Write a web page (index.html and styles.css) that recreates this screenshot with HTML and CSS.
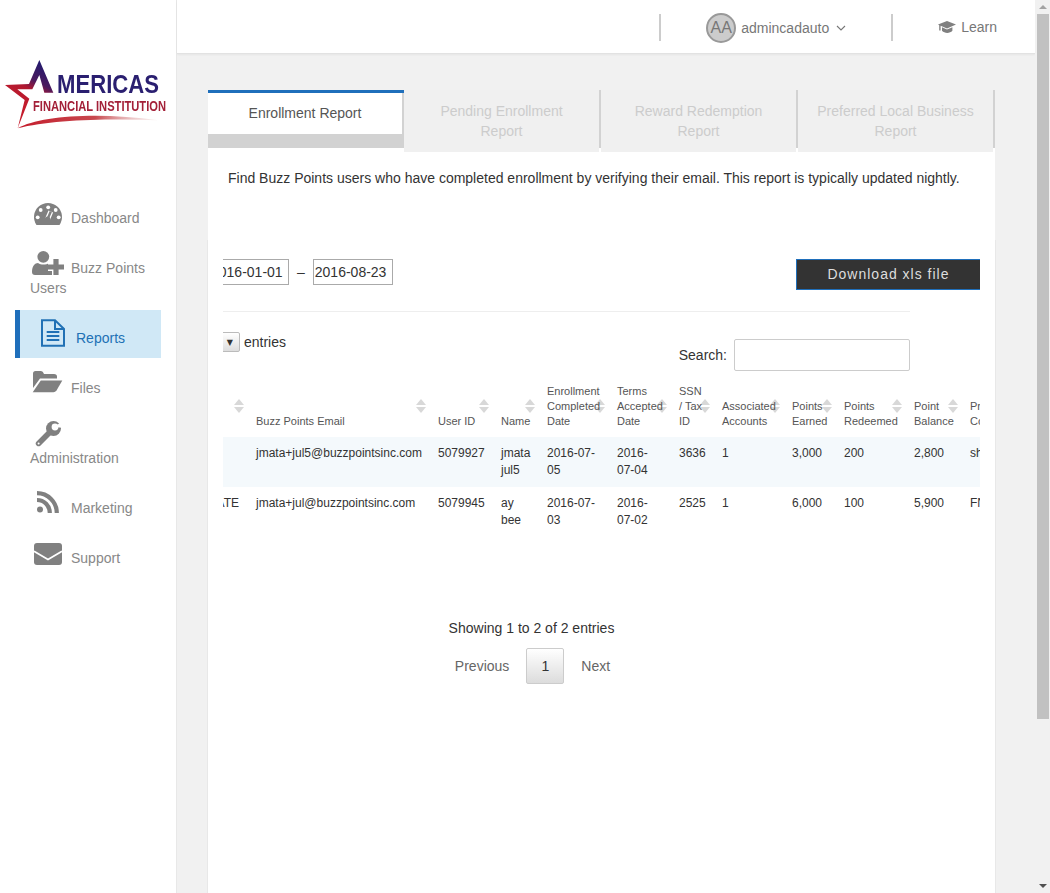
FILE: index.html
```html
<!DOCTYPE html>
<html lang="en">
<head>
<meta charset="utf-8">
<title>Enrollment Report</title>
<link rel="stylesheet" href="styles.css">
</head>
<body>
<div class="app">
  <aside class="sidebar">
    <svg class="logo" viewBox="0 0 176 110" width="176" height="110">
      <defs>
        <linearGradient id="starFill" gradientUnits="userSpaceOnUse" x1="125" y1="70" x2="60" y2="190">
          <stop offset="0" stop-color="#241a6e"/>
          <stop offset="0.4" stop-color="#4a1a5e"/>
          <stop offset="0.62" stop-color="#b01830"/>
          <stop offset="1" stop-color="#c41c2c"/>
        </linearGradient>
        <linearGradient id="swooshFill" x1="0" y1="0" x2="1" y2="0">
          <stop offset="0" stop-color="#c41c2c"/>
          <stop offset="0.55" stop-color="#c8484e"/>
          <stop offset="1" stop-color="#e8c8c8" stop-opacity="0.2"/>
        </linearGradient>
      </defs>
      <g transform="scale(0.3333)">
        <polygon fill="url(#starFill)" points="118,60 160,158 133,158 118,105 97,148 52,148 88,176 53,265 74,180 15,135 87,132"/>
        <path fill="url(#swooshFill)" d="M53 265 C120 226 300 216 476 241 C320 235 150 240 53 265Z"/>
      </g>
      <text class="logo-main" x="57" y="53" textLength="102" lengthAdjust="spacingAndGlyphs">MERICAS</text>
      <text class="logo-sub" x="33" y="71" textLength="133" lengthAdjust="spacingAndGlyphs">FINANCIAL INSTITUTION</text>
    </svg>
    <nav class="nav">
      <a class="nav-item">
        <svg class="nav-icon" viewBox="0 0 28 28"><path class="ico" d="M2.5 27 A14 14 0 1 1 25.5 27Z"/><g class="ico-cut"><circle cx="14.2" cy="9.3" r="1.9"/><circle cx="6.7" cy="12" r="1.9"/><circle cx="21.7" cy="12" r="1.9"/><circle cx="3.7" cy="19.3" r="1.9"/><circle cx="24.7" cy="19.3" r="1.9"/></g><path class="needle-cut" d="M13.6 21 L16.8 13.5"/><path class="needle" d="M13.6 21 L16.8 13.5"/><circle class="ico" cx="13.6" cy="21" r="2.6"/></svg>Dashboard
      </a>
      <a class="nav-item">
        <svg class="nav-icon" viewBox="0 0 28 28"><circle class="ico" cx="9.3" cy="8.8" r="5.9"/><path class="ico" d="M-2 24 C-2 18 1 15 4 15 C7 17 12 17 15 15 C18 15 20 17 20 20 V27 H1 C-1 27 -2 26 -2 24Z"/><path class="plus-cut" d="M22 11 V27 M14 19 H30"/><path class="plus" d="M22 11 V27 M14 19 H30"/></svg>Buzz Points Users
      </a>
      <a class="nav-item nav-item-active">
        <svg class="nav-icon" viewBox="0 0 28 28"><path class="doc" d="M3 2.3 H16 L25 11 V27.7 H3Z"/><path class="doc" d="M16 2.3 V11 H25"/><path class="doc-lines" d="M7.7 13.9 H20.3 M7.7 18 H20.3 M7.7 22 H20.3"/></svg>Reports
      </a>
      <a class="nav-item">
        <svg class="nav-icon" viewBox="0 0 28 28"><path class="ico" d="M-1 5.5 Q-1 3 1.5 3 H7 Q9 3 10 6 H20 Q23 6 23 8.5 V10.5 H6 L-1 20Z"/><path class="ico" d="M6.8 12.5 H28.3 L22.5 22.5 Q21.3 24.3 19.5 24.3 H-1.3Z"/></svg>Files
      </a>
      <a class="nav-item">
        <svg class="nav-icon" viewBox="0 0 28 28"><path class="wrench" d="M4.6 25.4 L16 14"/><circle class="ico" cx="19.5" cy="10.5" r="7.5"/><circle class="ico-cut" cx="21" cy="9" r="3.4"/><polygon class="ico-cut" points="21,9 30,1 30,10"/><circle class="ico-cut" cx="4.6" cy="25.4" r="1"/></svg>Administration
      </a>
      <a class="nav-item">
        <svg class="nav-icon" viewBox="0 0 28 28"><circle class="ico" cx="6" cy="21.6" r="3"/><path class="rss" d="M3 12 A12.8 12.8 0 0 1 15.8 25"/><path class="rss" d="M3 5.2 A19.8 19.8 0 0 1 22.8 25"/></svg>Marketing
      </a>
      <a class="nav-item">
        <svg class="nav-icon" viewBox="0 0 28 28"><rect class="ico" x="0" y="5" width="28" height="22" rx="3"/><path class="env-cut" d="M0 13.2 L14 21.5 L28 13.2"/></svg>Support
      </a>
    </nav>
  </aside>

  <div class="main">
    <header class="topbar">
      <span class="divider"></span>
      <div class="user">
        <span class="avatar">AA</span>
        <span>admincadauto</span>
        <svg class="chevron" viewBox="0 0 10 6" width="10" height="6"><path d="M1 1 L5 5 L9 1"/></svg>
      </div>
      <span class="divider"></span>
      <div class="learn">
        <svg class="cap" viewBox="0 0 18 13" width="18" height="13"><path d="M9 0 L18 3.6 L9 7.4 L2.6 4.8 V9.6 H1.2 V4.2 L0 3.6Z"/><path d="M4 6.2 L9 8.4 L14.4 6.2 V9.8 C12 12.6 6.5 12.6 4 9.8Z"/></svg>
        <span>Learn</span>
      </div>
    </header>

    <section class="panel">
      <div class="tabs">
        <div class="tab tab-active">Enrollment Report</div>
        <div class="tab">Pending Enrollment Report</div>
        <div class="tab">Reward Redemption Report</div>
        <div class="tab">Preferred Local Business Report</div>
      </div>
      <p class="description">Find Buzz Points users who have completed enrollment by verifying their email. This report is typically updated nightly.</p>
      <div class="report">
        <div class="clip">
          <div class="inner">
            <div class="controls">
              <div class="dates">
                <input class="date" type="text" value="2016-01-01">
                <span>–</span>
                <input class="date" type="text" value="2016-08-23">
              </div>
              <button class="download" type="button">Download xls file</button>
            </div>
            <div class="rule"></div>
            <div class="filters">
              <div class="length"><span class="select"><span class="select-arrow">▼</span></span><span>entries</span></div>
              <label class="search">Search:<input class="search-input" type="text"></label>
            </div>
            <table class="data">
              <colgroup>
                <col class="c0"><col class="c1"><col class="c2"><col class="c3"><col class="c4"><col class="c5"><col class="c6"><col class="c4"><col class="c7"><col class="c4"><col class="c8"><col class="c4">
              </colgroup>
              <thead>
                <tr>
                  <th></th>
                  <th>Buzz Points Email</th>
                  <th>User ID</th>
                  <th>Name</th>
                  <th>Enrollment<br>Completed<br>Date</th>
                  <th>Terms<br>Accepted<br>Date</th>
                  <th>SSN<br>/ Tax<br>ID</th>
                  <th>Associated<br>Accounts</th>
                  <th>Points<br>Earned</th>
                  <th>Points<br>Redeemed</th>
                  <th>Point<br>Balance</th>
                  <th>Program<br>Code</th>
                </tr>
              </thead>
              <tbody>
                <tr class="odd">
                  <td class="first"></td>
                  <td class="email">jmata+jul5@buzzpointsinc.com</td>
                  <td>5079927</td>
                  <td>jmata<br>jul5</td>
                  <td>2016-07-<br>05</td>
                  <td>2016-<br>07-04</td>
                  <td>3636</td>
                  <td>1</td>
                  <td>3,000</td>
                  <td>200</td>
                  <td>2,800</td>
                  <td>shop</td>
                </tr>
                <tr>
                  <td class="first">STATE</td>
                  <td class="email">jmata+jul@buzzpointsinc.com</td>
                  <td>5079945</td>
                  <td>ay<br>bee</td>
                  <td>2016-07-<br>03</td>
                  <td>2016-<br>07-02</td>
                  <td>2525</td>
                  <td>1</td>
                  <td>6,000</td>
                  <td>100</td>
                  <td>5,900</td>
                  <td>FNB</td>
                </tr>
              </tbody>
            </table>
            <div class="table-foot">
              <div class="info">Showing 1 to 2 of 2 entries</div>
              <div class="pager">
                <span>Previous</span>
                <span class="page-current">1</span>
                <span>Next</span>
              </div>
            </div>
          </div>
        </div>
      </div>
    </section>
  </div>

  <div class="scrollbar">
    <span class="scroll-up"></span>
    <span class="scroll-thumb"></span>
    <span class="scroll-down"></span>
  </div>
</div>
</body>
</html>
```
FILE: styles.css
```css
* { box-sizing: border-box; }
html, body { margin: 0; height: 100%; overflow: hidden; }
body {
  font-family: "Liberation Sans", Arial, sans-serif;
  font-size: 14px;
  line-height: 20px;
  color: #333;
  background: #f1f1f1;
}
.app { display: flex; height: 893px; }

/* Sidebar */
.sidebar {
  width: 177px;
  flex: none;
  background: #fff;
  border-right: 1px solid #e8e8e8;
}
.logo { display: block; margin-top: 40px; overflow: visible; filter: blur(0.3px); }
.logo-main { font: bold 25px "Liberation Sans", Arial, sans-serif; fill: #2a1f70; }
.logo-sub { font: bold 15.5px "Liberation Sans", Arial, sans-serif; fill: #a32038; }
.nav {
  display: flex;
  flex-direction: column;
  gap: 2px;
  margin: 40px 0 0 15px;
  width: 146px;
}
.nav-item {
  display: block;
  padding: 18px 10px 10px 15px;
  color: #888;
}
.nav-item-active {
  border-left: 5px solid #1f6fbb;
  background: #d0e8f6;
  color: #2171b5;
}
.nav-icon {
  display: inline-block;
  width: 28px;
  height: 28px;
  margin: -10px 9px 0 4px;
  vertical-align: -3px;
  overflow: visible;
}
.ico { fill: #808080; }
.ico-cut { fill: #fff; }
.needle-cut { stroke: #fff; stroke-width: 5; fill: none; }
.needle { stroke: #808080; stroke-width: 2.4; fill: none; }
.plus-cut { stroke: #fff; stroke-width: 8; fill: none; }
.plus { stroke: #808080; stroke-width: 5.2; fill: none; }
.doc { fill: none; stroke: #2171b5; stroke-width: 2; }
.doc-lines { fill: none; stroke: #2171b5; stroke-width: 2; }
.wrench { stroke: #808080; stroke-width: 5.6; stroke-linecap: round; fill: none; }
.rss { fill: none; stroke: #808080; stroke-width: 4.2; }
.env-cut { fill: none; stroke: #fff; stroke-width: 1.8; }

/* Main */
.main { flex: 1; min-width: 0; }
.topbar {
  display: flex;
  align-items: center;
  justify-content: flex-end;
  height: 54px;
  padding: 1px 38px 0 0;
  background: #fff;
  border-bottom: 1px solid #e2e2e2;
  box-shadow: 0 1px 2px rgba(0, 0, 0, 0.05);
  color: #777;
}
.divider { width: 2px; height: 27px; background: #ccc; }
.user { display: flex; align-items: center; margin: 2px 45px 0 45px; }
.avatar {
  display: flex;
  align-items: center;
  justify-content: center;
  width: 30px;
  height: 30px;
  margin-right: 5px;
  border: 2px solid #999;
  border-radius: 50%;
  background: #ccc;
  font-size: 16px;
  color: #777;
}
.chevron { margin-left: 7px; fill: none; stroke: #777; stroke-width: 1.1; }
.learn { display: flex; align-items: center; gap: 5px; margin: 0 0 0 45px; }
.cap { fill: #808080; }

/* Panel */
.panel {
  width: 787px;
  margin: 36px 0 0 31px;
  background: #fff;
  min-height: 803px;
}
.tabs { display: flex; height: 62px; background: #f1f1f1; }
.tab {
  width: 197px;
  height: 62px;
  padding: 11px 18px 0 16px;
  text-align: center;
  color: #ccc;
  background:
    linear-gradient(#d2d2d2, #d2d2d2) right top / 2px 58px no-repeat,
    linear-gradient(#f0f0f0, #f0f0f0) left top / calc(100% - 2px) 62px no-repeat,
    #fff;
}
.tab-active {
  width: 196px;
  padding: 10px 2px 0 0;
  color: #555;
  background: #fff;
  height: 62px;
  position: relative;
  border-top: 3px solid #1f6fbb;
}
.tab-active::after {
  content: "";
  position: absolute;
  left: 0;
  right: 0;
  bottom: 4px;
  height: 14px;
  background: #d2d2d2;
}
.tab-active::before {
  content: "";
  position: absolute;
  right: 0;
  top: 0;
  bottom: 18px;
  width: 2px;
  background: #d2d2d2;
}
.description {
  height: 88px;
  margin: 0;
  padding: 16px 20px 0;
}
.report {
  padding: 19px 15px 0;
  box-shadow: -1px 0 0 #e8e8e8, 1px 0 0 #e8e8e8;
  min-height: 653px;
}
.clip { overflow: hidden; isolation: isolate; width: 757px; height: 440px; }
.inner { width: 835px; margin-left: -14px; }
.controls { display: flex; justify-content: space-between; width: 771px; height: 31px; }
.dates { display: flex; align-items: flex-start; gap: 8px; line-height: 26px; }
.date {
  width: 80px;
  height: 26px;
  padding: 1px;
  border: 1px solid #aaa;
  font: 14px "Liberation Sans", Arial, sans-serif;
  color: #333;
}
.download {
  width: 184px;
  height: 31px;
  padding: 0 0 2px;
  border: 1px solid #1f6fbb;
  border-right: 0;
  background: #333;
  color: #ddd;
  font: 14px "Liberation Sans", Arial, sans-serif;
  letter-spacing: 1px;
}
.rule { width: 701px; height: 1px; margin-top: 21px; background: #eee; }
.filters {
  display: flex;
  justify-content: space-between;
  align-items: flex-start;
  width: 701px;
  margin-top: 20px;
  height: 39px;
}
.length { display: flex; align-items: center; gap: 4px; height: 20px; }
.select {
  display: flex;
  align-items: center;
  justify-content: flex-end;
  width: 31px;
  height: 20px;
  padding-right: 6px;
  border: 1px solid #bbb;
  border-radius: 2px;
  background: linear-gradient(#fff, #ddd);
}
.select-arrow { font: 8px "DejaVu Sans", sans-serif; color: #333; }
.search { display: flex; align-items: center; gap: 7px; margin-top: 7px; }
.search-input {
  width: 176px;
  height: 32px;
  border: 1px solid #ccc;
  border-radius: 2px;
  background: #fff;
}

/* Table */
.data {
  table-layout: fixed;
  width: 821px;
  margin-top: 13px;
  border-collapse: collapse;
  font-size: 12px;
  line-height: 17px;
}
.c0 { width: 37px; }
.c1 { width: 182px; }
.c2 { width: 63px; }
.c3 { width: 46px; }
.c4 { width: 70px; }
.c5 { width: 62px; }
.c6 { width: 43px; }
.c7 { width: 52px; }
.c8 { width: 56px; }
.data th {
  position: relative;
  padding: 0 10px 8px;
  font-size: 11px;
  font-weight: normal;
  line-height: 15px;
  text-align: left;
  vertical-align: bottom;
  white-space: nowrap;
  color: #555;
}
.data th::before,
.data th::after {
  content: "";
  position: absolute;
  z-index: -1;
  right: 2px;
  width: 0;
  height: 0;
  border-left: 5px solid transparent;
  border-right: 5px solid transparent;
}
.data th::before { top: 15px; border-bottom: 6px solid #d8d8d8; }
.data th::after { top: 23px; border-top: 6px solid #d8d8d8; }
.data td {
  height: 50px;
  padding: 8px 10px 0;
  vertical-align: top;
  white-space: nowrap;
}
.data td.first { padding-right: 7px; direction: rtl; }
.odd td { background: #f4f9fc; }

/* Table footer */
.table-foot { width: 645px; margin-top: 81px; text-align: center; }
.info { height: 20px; }
.pager {
  display: flex;
  justify-content: center;
  align-items: center;
  gap: 17px;
  margin-top: 10px;
  padding-left: 2px;
  color: #666;
}
.page-current {
  display: flex;
  align-items: center;
  justify-content: center;
  width: 38px;
  height: 36px;
  border: 1px solid #ccc;
  border-radius: 2px;
  background: linear-gradient(#fff, #dcdcdc);
  color: #333;
}

/* Window scrollbar */
.scrollbar {
  flex: none;
  display: flex;
  flex-direction: column;
  align-items: center;
  width: 15px;
  height: 893px;
  background: #f1f1f1;
}
.scroll-up,
.scroll-down {
  flex: none;
  width: 0;
  height: 0;
  border-left: 4px solid transparent;
  border-right: 4px solid transparent;
}
.scroll-up { margin-top: 5px; border-bottom: 4px solid #a3a3a3; }
.scroll-thumb { flex: none; width: 12px; height: 705px; margin: 5px 0 0 1px; background: #c1c1c1; }
.scroll-down { margin-top: auto; margin-bottom: 5px; border-top: 4px solid #505050; }
```
